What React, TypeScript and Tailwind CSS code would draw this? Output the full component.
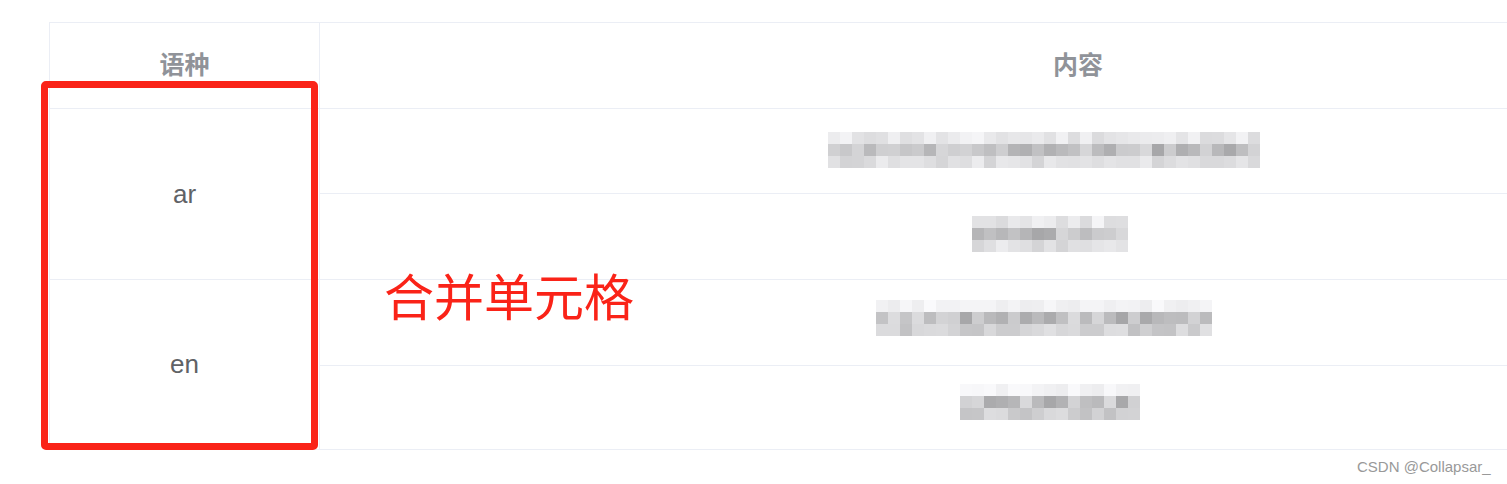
import React from "react";

function rand(seed: number) {
  let s = seed;
  return () => {
    s = (s * 9301 + 49297) % 233280;
    return s / 233280;
  };
}

function Pixels({ cols, rows, seed, lightTop = false }: { cols: number; rows: number; seed: number; lightTop?: boolean }) {
  const r = rand(seed);
  const cells: React.ReactElement[] = [];
  for (let y = 0; y < rows; y++) {
    for (let x = 0; x < cols; x++) {
      let v: number;
      if (lightTop && y === 0) v = 236 + r() * 14;
      else if (y === 0) v = 218 + r() * 28;
      else if (y === rows - 1 && !lightTop) v = 210 + r() * 26;
      else if (y === 1) v = 165 + r() * 55;
      else v = 192 + r() * 32;
      const c = Math.round(v);
      cells.push(
        <rect key={`${x}-${y}`} x={x * 12} y={y * 12} width={12} height={12} fill={`rgb(${c},${c},${Math.min(255, c + 2)})`} />
      );
    }
  }
  return (
    <svg width={cols * 12} height={rows * 12} viewBox={`0 0 ${cols * 12} ${rows * 12}`} className="block">
      {cells}
    </svg>
  );
}

export default function App() {
  const font = { fontFamily: '"Liberation Sans", Arial, "Noto Sans CJK SC", sans-serif' };
  const cjk = { fontFamily: '"Noto Sans CJK SC", "Liberation Sans", sans-serif' };
  return (
    <div className="relative w-[1507px] h-[484px] overflow-hidden bg-white" style={font}>
      <div className="pt-[22px] pl-[49px]">
        <div className="w-[1787px] border-t border-l border-[#ebeef5] flex">
          {/* first column */}
          <div className="w-[270px] shrink-0 flex flex-col border-r border-[#ebeef5]">
            <div className="h-[86px] border-b border-[#ebeef5] flex items-center justify-center">
              <span className="text-[25px] leading-[30px] font-bold text-[#909399] mb-[5px]" style={cjk}>语种</span>
            </div>
            <div className="h-[171px] border-b border-[#ebeef5] flex items-center justify-center">
              <span className="text-[26px] text-[#606266]">ar</span>
            </div>
            <div className="h-[170px] border-b border-[#ebeef5] flex items-center justify-center">
              <span className="text-[26px] text-[#606266]">en</span>
            </div>
          </div>
          {/* content column */}
          <div className="flex-1 flex flex-col">
            <div className="h-[86px] border-b border-[#ebeef5] flex items-center justify-center">
              <span className="text-[25px] leading-[30px] font-bold text-[#909399] mb-[5px]" style={cjk}>内容</span>
            </div>
            <div className="h-[85px] border-b border-[#ebeef5] pt-[23px] pl-[508px]">
              <Pixels cols={36} rows={3} seed={11} />
            </div>
            <div className="h-[86px] border-b border-[#ebeef5] pt-[22px] pl-[652px]">
              <Pixels cols={13} rows={3} seed={27} />
            </div>
            <div className="h-[86px] border-b border-[#ebeef5] pt-[20px] pl-[556px]">
              <Pixels cols={28} rows={3} seed={53} lightTop />
            </div>
            <div className="h-[84px] border-b border-[#ebeef5] pt-[18px] pl-[640px]">
              <Pixels cols={15} rows={3} seed={91} lightTop />
            </div>
          </div>
        </div>
      </div>

      {/* red annotation box */}
      <div className="absolute left-[41px] top-[81px] w-[277px] h-[369px] border-[7px] border-[#fa2318] rounded-[5px]" />
      {/* red annotation text */}
      <div className="absolute left-[384px] top-[263px] text-[50px] leading-[62px] text-[#fa2318]" style={cjk}>
        合并单元格
      </div>
      {/* watermark */}
      <div className="absolute left-[1357px] top-[458px] text-[15px] leading-[18px] text-[#999999]">
        CSDN @Collapsar_
      </div>
    </div>
  );
}
